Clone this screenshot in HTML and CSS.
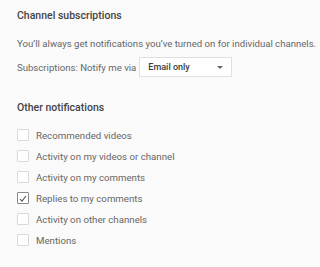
FILE: index.html
```html
<!DOCTYPE html>
<html>
<head>
<meta charset="utf-8">
<link rel="stylesheet" href="styles.css">
</head>
<body>
<div class="page">
  <section class="section">
    <h2 class="title">Channel subscriptions</h2>
    <p class="desc intro">You’ll always get notifications you’ve turned on for individual channels.</p>
    <div class="notify-row">
      <span class="desc">Subscriptions: Notify me via</span>
      <div class="select">
        <span class="select-text">Email only</span>
        <span class="caret"></span>
      </div>
    </div>
  </section>
  <section class="section other">
    <h2 class="title">Other notifications</h2>
    <ul class="list">
      <li class="item"><span class="box"></span><span class="label">Recommended videos</span></li>
      <li class="item"><span class="box"></span><span class="label">Activity on my videos or channel</span></li>
      <li class="item"><span class="box"></span><span class="label">Activity on my comments</span></li>
      <li class="item"><span class="box checked"><svg viewBox="0 0 12 12" width="12" height="12"><path d="M2.4 6.0 L4.8 8.6 L9.6 2.4" fill="none" stroke="#555" stroke-width="1.3"/></svg></span><span class="label">Replies to my comments</span></li>
      <li class="item"><span class="box"></span><span class="label">Activity on other channels</span></li>
      <li class="item"><span class="box"></span><span class="label">Mentions</span></li>
    </ul>
  </section>
</div>
</body>
</html>
```
FILE: styles.css
```css
html, body {
  margin: 0;
  padding: 0;
  background: #fafafa;
}
body {
  font-family: Roboto, "Liberation Sans", Arial, sans-serif;
  width: 320px;
  height: 267px;
  overflow: hidden;
}
.page {
  padding: 9px 0 0 17px;
}
.title {
  margin: 0;
  font-size: 10.5px;
  font-weight: 500;
  color: #444;
  line-height: 14px;
}
.desc {
  margin: 0;
  font-size: 9.6px;
  color: #666;
  line-height: 13px;
  white-space: nowrap;
}
.intro {
  margin-top: 14px;
}
.notify-row {
  display: flex;
  align-items: center;
  gap: 3px;
  margin-top: 7px;
}
.select {
  box-sizing: border-box;
  width: 93px;
  height: 20px;
  border: 1px solid #e0e0e0;
  background: #fff;
  display: flex;
  align-items: center;
  justify-content: space-between;
  padding: 0 8px 0 8px;
}
.select-text {
  font-size: 9px;
  font-weight: 500;
  color: #3a3a3a;
}
.caret {
  width: 0;
  height: 0;
  border-left: 3px solid transparent;
  border-right: 3px solid transparent;
  border-top: 3px solid #666;
}
.other {
  margin-top: 24px;
}
.list {
  list-style: none;
  margin: 14px 0 0 0;
  padding: 0;
  display: flex;
  flex-direction: column;
  gap: 9px;
}
.item {
  display: flex;
  align-items: center;
  height: 12px;
}
.box {
  box-sizing: border-box;
  width: 12px;
  height: 12px;
  border: 1px solid #d9d9d9;
  border-radius: 1px;
  background: #fff;
  margin-right: 7px;
  display: flex;
}
.box.checked {
  border-color: #8a8a8a;
}
.box svg {
  display: block;
}
.label {
  font-size: 9.7px;
  color: #666;
  line-height: 13px;
  white-space: nowrap;
}
```
